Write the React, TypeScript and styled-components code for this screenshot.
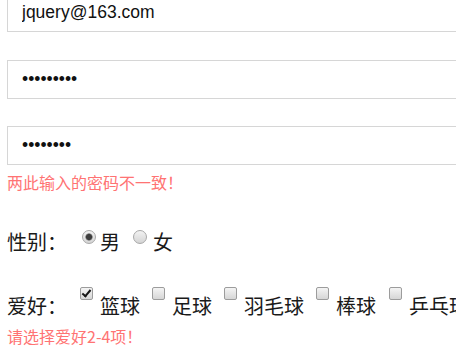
import React from 'react';
import styled, { createGlobalStyle } from 'styled-components';

const GlobalStyle = createGlobalStyle`
    html, body {
        margin: 0;
        padding: 0;
        overflow: hidden;
        background: #fff;
    }

    body {
        font-family: "Noto Sans CJK SC", "Liberation Sans", sans-serif;
        color: #1a1a1a;
    }
`;

// <FORM>
const Form = styled.form`
    display: flex;
    flex-direction: column;
    margin-top: -7px;
    padding-left: 7px;
`;

const Field = styled.div<{ $gap: number }>`
    display: flex;
    flex-direction: column;
    margin-top: ${({ $gap }) => $gap}px;

    &:first-child {
        margin-top: 0;
    }
`;

const TextInput = styled.input`
    box-sizing: border-box;
    width: 520px;
    height: 39px;
    padding: 0 14px;
    border: 1px solid #d6d6d6;
    border-radius: 0;
    outline: none;
    background: #fff;

    font-family: "Liberation Sans", Arial, sans-serif;
    font-size: 17.5px;
    color: #111;
`;

const ErrorText = styled.div<{ $top: number }>`
    margin-top: ${({ $top }) => $top}px;
    font-size: 16px;
    line-height: 20px;
    color: #ff7373;
`;

const ChoiceRow = styled.div<{ $top: number }>`
    display: flex;
    align-items: flex-start;
    margin-top: ${({ $top }) => $top}px;
    font-size: 20px;
    line-height: 28px;
    white-space: nowrap;
`;

const RowLabel = styled.span`
    width: 60px;
    flex-shrink: 0;
`;

const Option = styled.label<{ $lead: number; $gap: number; $lift: number }>`
    display: flex;
    align-items: flex-start;
    gap: ${({ $gap }) => $gap}px;
    margin-left: ${({ $lead }) => $lead}px;

    & > input {
        margin-top: ${({ $lift }) => $lift}px;
    }
`;

const Radio = styled.input.attrs({ type: 'radio' })`
    appearance: none;
    box-sizing: border-box;
    width: 14px;
    height: 14px;
    margin: 0;
    flex-shrink: 0;
    border: 1px solid #a8a8a8;
    border-radius: 50%;
    background: linear-gradient(#f2f2f2, #d4d4d4);

    &:checked {
        background: radial-gradient(circle, #3c3c3c 0 2.6px, #8a8a8a 3.4px, transparent 4px),
            linear-gradient(#f2f2f2, #d4d4d4);
    }
`;

const Checkbox = styled.input.attrs({ type: 'checkbox' })`
    appearance: none;
    position: relative;
    box-sizing: border-box;
    width: 13px;
    height: 13px;
    margin: 0;
    flex-shrink: 0;
    border: 1px solid #9c9c9c;
    border-radius: 2px;
    background: linear-gradient(#f4f4f4, #d6d6d6);

    &:checked::before {
        content: '';
        position: absolute;
        left: 3px;
        top: 0px;
        width: 3px;
        height: 7px;
        border-right: 2.5px solid #151515;
        border-bottom: 2.5px solid #151515;
        transform: rotate(40deg);
    }
`;
// </FORM>

const hobbies = [
    { name: '篮球', checked: true, lead: 13 },
    { name: '足球', checked: false, lead: 12 },
    { name: '羽毛球', checked: false, lead: 12 },
    { name: '棒球', checked: false, lead: 12 },
    { name: '乒乓球', checked: false, lead: 13 },
];

export default function App() {
    return (
        <>
            <GlobalStyle />
            <Form onSubmit={(e) => e.preventDefault()}>
                <Field $gap={0}>
                    <TextInput type="text" defaultValue="jquery@163.com" />
                </Field>
                <Field $gap={28}>
                    <TextInput type="password" defaultValue="123456789" />
                </Field>
                <Field $gap={27}>
                    <TextInput type="password" defaultValue="12345678" />
                    <ErrorText $top={7}>两此输入的密码不一致！</ErrorText>
                </Field>

                <ChoiceRow $top={36}>
                    <RowLabel>性别：</RowLabel>
                    <Option $lead={15} $gap={4} $lift={2}>
                        <Radio name="sex" defaultChecked />
                        <span>男</span>
                    </Option>
                    <Option $lead={13} $gap={6} $lift={2}>
                        <Radio name="sex" />
                        <span>女</span>
                    </Option>
                </ChoiceRow>

                <ChoiceRow $top={36}>
                    <RowLabel>爱好：</RowLabel>
                    {hobbies.map((h) => (
                        <Option key={h.name} $lead={h.lead} $gap={7} $lift={-5}>
                            <Checkbox defaultChecked={h.checked} />
                            <span>{h.name}</span>
                        </Option>
                    ))}
                </ChoiceRow>
                <ErrorText $top={6}>请选择爱好2-4项！</ErrorText>
            </Form>
        </>
    );
}
